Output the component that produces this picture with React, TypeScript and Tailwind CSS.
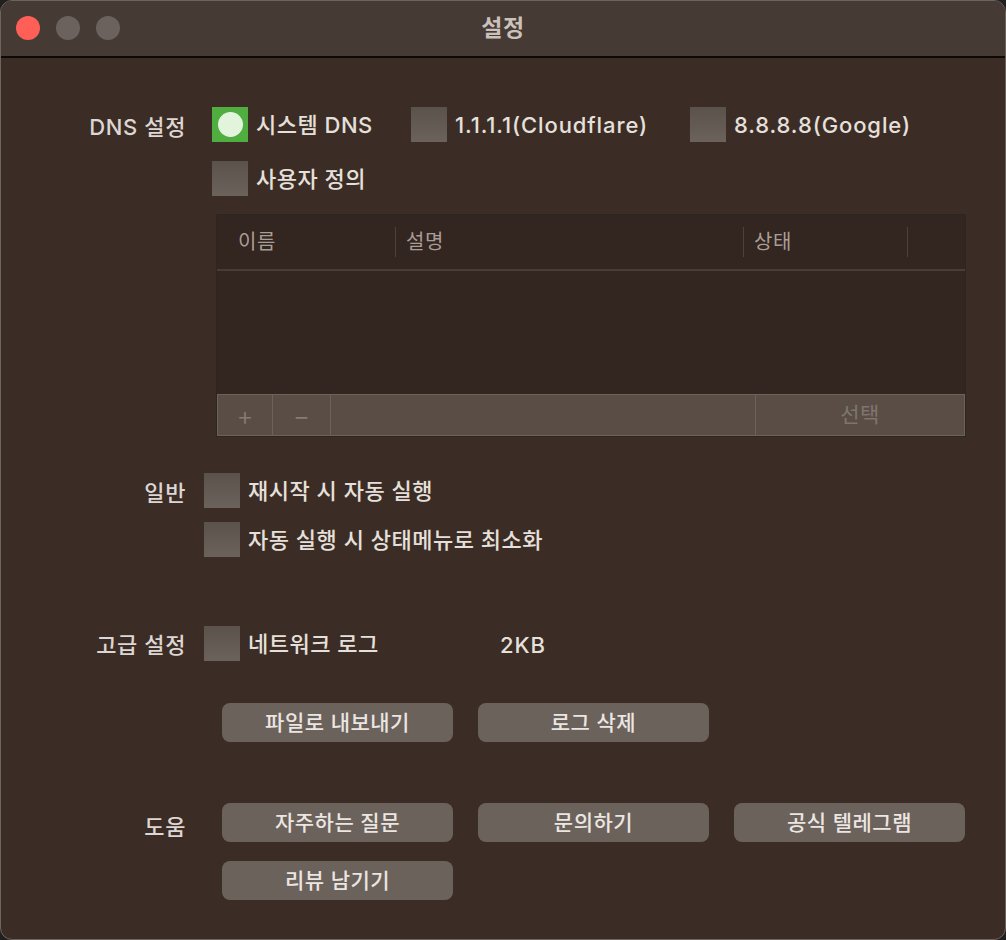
import React from "react";

const font = { fontFamily: 'Inter, "Noto Sans CJK KR", sans-serif' };

function Box({ checked = false }: { checked?: boolean }) {
  if (checked) {
    return (
      <div className="w-[36px] h-[35px] shrink-0 bg-[#4fae3f] flex items-center justify-center">
        <div className="w-[25px] h-[25px] rounded-full bg-[#e3f4dd]" />
      </div>
    );
  }
  return <div className="w-[36px] h-[35px] shrink-0 bg-gradient-to-b from-[#5c524c] to-[#6b625c]" />;
}

function Check({ label, checked, latin }: { label: string; checked?: boolean; latin?: boolean }) {
  return (
    <div className="flex items-center gap-[8px]">
      <Box checked={checked} />
      <span
        className={`text-[22px] font-medium text-[#e6e0dc] leading-none ${latin ? "tracking-[0.9px]" : "tracking-[0.5px]"}`}
      >
        {label}
      </span>
    </div>
  );
}

function Btn({ children }: { children: React.ReactNode }) {
  return (
    <button className="w-[231px] h-[39px] rounded-[8px] bg-[#6b625c] text-[21px] font-medium tracking-[0.5px] text-[#ece6e2] flex items-center justify-center">
      {children}
    </button>
  );
}

function Label({ children }: { children: React.ReactNode }) {
  return (
    <div className="w-[185px] shrink-0 text-right text-[22px] font-medium tracking-[0.6px] text-[#ddd6d2] leading-none">
      {children}
    </div>
  );
}

export default function App() {
  return (
    <div className="w-[1006px] h-[940px] bg-[#202020]" style={font}>
      <div className="w-full h-full rounded-[12px] overflow-hidden border border-[#6d645f] flex flex-col bg-[#3b2d25]">
        {/* title bar */}
        <div className="h-[57px] shrink-0 bg-[#463a35] border-b-2 border-[#0f0906] relative flex items-center justify-center">
          <div className="absolute left-[15px] top-[15px] flex gap-[16px]">
            <div className="w-[24px] h-[24px] rounded-full bg-[#fe5f57]" />
            <div className="w-[24px] h-[24px] rounded-full bg-[#6b625d]" />
            <div className="w-[24px] h-[24px] rounded-full bg-[#6b625d]" />
          </div>
          <span className="text-[23px] font-bold tracking-[0.5px] text-[#cbc1bb]">설정</span>
        </div>

        <div className="flex flex-col pt-[49px]">
          {/* DNS */}
          <div className="flex items-start">
            <Label>
              <div className="pt-[9px]">DNS 설정</div>
            </Label>
            <div className="ml-[26px] flex flex-col gap-[19px]">
              <div className="flex items-center">
                <div className="w-[199px]">
                  <Check label="시스템 DNS" checked />
                </div>
                <div className="w-[279px]">
                  <Check label="1.1.1.1(Cloudflare)" latin />
                </div>
                <Check label="8.8.8.8(Google)" latin />
              </div>
              <Check label="사용자 정의" />
            </div>
          </div>

          {/* table */}
          <div className="ml-[215px] mt-[18px] w-[750px] border border-[#2b2523] bg-[#33251f] flex flex-col">
            <div className="h-[56px] flex items-center border-b-2 border-[#4a3c34] text-[20px] tracking-[0.5px] text-[#a99e97]">
              <div className="w-[178px] pl-[21px]">이름</div>
              <div className="w-px h-[30px] bg-[#4d4139]" />
              <div className="w-[347px] pl-[10px]">설명</div>
              <div className="w-px h-[30px] bg-[#4d4139]" />
              <div className="w-[163px] pl-[10px]">상태</div>
              <div className="w-px h-[30px] bg-[#4d4139]" />
            </div>
            <div className="h-[123px]" />
            <div className="h-[42px] flex bg-[#594d45] border border-[#6d625b] text-[#877c75]">
              <div className="w-[55px] flex items-center justify-center border-r border-[#6d625b] text-[26px] font-light">+</div>
              <div className="w-[58px] flex items-center justify-center border-r border-[#6d625b] text-[26px] font-light">−</div>
              <div className="flex-1 border-r border-[#6d625b]" />
              <div className="w-[208px] flex items-center justify-center text-[21px] tracking-[0.5px] text-[#7f756f]">선택</div>
            </div>
          </div>

          {/* 일반 */}
          <div className="flex items-start mt-[36px]">
            <Label>
              <div className="pt-[9px]">일반</div>
            </Label>
            <div className="ml-[18px] flex flex-col gap-[14px]">
              <Check label="재시작 시 자동 실행" />
              <Check label="자동 실행 시 상태메뉴로 최소화" />
            </div>
          </div>

          {/* 고급 설정 */}
          <div className="flex items-start mt-[68px]">
            <Label>
              <div className="pt-[9px]">고급 설정</div>
            </Label>
            <div className="ml-[18px] flex items-center">
              <div className="w-[296px]">
                <Check label="네트워크 로그" />
              </div>
              <span className="text-[22px] font-medium tracking-[0.9px] text-[#e6e0dc] pt-[4px]">2KB</span>
            </div>
          </div>
          <div className="ml-[221px] mt-[41px] flex gap-[25px]">
            <Btn>파일로 내보내기</Btn>
            <Btn>로그 삭제</Btn>
          </div>

          {/* 도움 */}
          <div className="flex items-start mt-[61px]">
            <Label>
              <div className="pt-[13px]">도움</div>
            </Label>
            <div className="ml-[36px] flex flex-col gap-[19px]">
              <div className="flex gap-[25px]">
                <Btn>자주하는 질문</Btn>
                <Btn>문의하기</Btn>
                <Btn>공식 텔레그램</Btn>
              </div>
              <Btn>리뷰 남기기</Btn>
            </div>
          </div>
        </div>
      </div>
    </div>
  );
}
